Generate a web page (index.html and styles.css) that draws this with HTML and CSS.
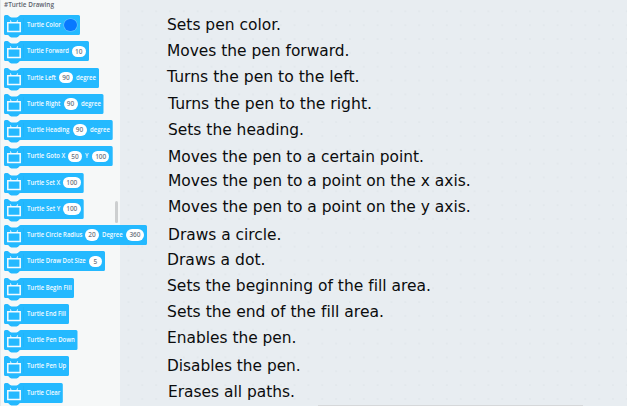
FILE: index.html
```
<!DOCTYPE html>
<html lang="en">
<head>
<meta charset="utf-8">
<title>Turtle Drawing</title>
<link rel="stylesheet" href="styles.css">
</head>
<body>
<main class="workspace">
  <aside class="palette">
    <h1 class="heading">#Turtle Drawing</h1>
    <div class="blocks" id="blocks"></div>
    <div class="scrollbar"></div>
  </aside>
  <section class="notes" id="notes"></section>
  <div class="hscroll"></div>
</main>
<script src="script.js"></script>
</body>
</html>
```
FILE: styles.css
```
* { box-sizing: border-box; }
body {
  margin: 0;
  width: 627px;
  height: 406px;
  overflow: hidden;
}
.workspace {
  position: relative;
  display: flex;
  height: 406px;
  background-color: #e8edf1;
  background-image: radial-gradient(circle, #e1e7eb 0.6px, transparent 1.1px);
  background-size: 13.85px 13.85px;
  background-position: 10.8px 4.4px;
}
.palette {
  position: relative;
  z-index: 1;
  width: 120px;
  flex: none;
  background: #f6f8f8;
  border-left: 1px solid #e6eaec;
}
.heading {
  margin: 0;
  padding-left: 3px;
  height: 15px;
  font: 600 6.4px/10px "Open Sans", sans-serif;
  color: #5d636d;
  white-space: nowrap;
}
.blocks {
  display: flex;
  flex-direction: column;
  gap: 6.25px;
  padding-left: 3px;
}
.block {
  position: relative;
  display: flex;
  align-items: center;
  flex: none;
  height: 20px;
  padding-left: 23px;
  font: 600 6.2px/10px "Open Sans", sans-serif;
  white-space: nowrap;
}
.shape {
  position: absolute;
  left: 0;
  top: 0;
  width: 100%;
  height: 23px;
  overflow: visible;
}
.label {
  position: relative;
  flex: none;
}
.label svg { display: block; overflow: visible; }
.label text { fill: #f4fcff; }
.pill {
  position: relative;
  flex: none;
  height: 11.5px;
  border-radius: 6px;
  background: #fff;
  color: #69717c;
  font: 500 6.5px/11.5px "Noto Sans", sans-serif;
  text-align: center;
}
.swatch {
  height: 12px;
  background: #0878ff;
  box-shadow: 0 0 0 0.6px #6cc4ff;
}
.scrollbar {
  position: absolute;
  left: 114px;
  top: 201px;
  width: 3px;
  height: 22px;
  border-radius: 2px;
  background: #cdcfd0;
}
.notes {
  padding-left: 47px;
  font: 15px/20px "DejaVu Sans", Verdana, sans-serif;
  font-variant-ligatures: none;
}
.note {
  height: 20px;
  white-space: nowrap;
}
.note svg { display: block; overflow: visible; }
.note text { fill: #0b0c0d; }
.hscroll {
  position: absolute;
  left: 318px;
  top: 405px;
  width: 265px;
  height: 1px;
  background: #d6d8da;
}
```
FILE: script.js
```
// Each block: overall width, then its parts as [kind, text, x offset, width].
const blocks = [
  [76, ['t', 'Turtle Color', 22.7, 33.8], ['c', '', 59.5, 13.5]],
  [85, ['t', 'Turtle Forward', 22.7, 41.8], ['p', '10', 67.5, 14.5]],
  [95, ['t', 'Turtle Left', 22.7, 28.8], ['p', '90', 55, 14], ['t', 'degree', 72, 20]],
  [99.5, ['t', 'Turtle Right', 22.7, 33.3], ['p', '90', 59.5, 14], ['t', 'degree', 76.5, 20]],
  [108.7, ['t', 'Turtle Heading', 22.7, 42.3], ['p', '90', 68.5, 14], ['t', 'degree', 85.5, 20]],
  [108.7, ['t', 'Turtle Goto X', 22.7, 38.3], ['p', '50', 64, 14], ['t', 'Y', 81.2, 3.5], ['p', '100', 88, 17.5]],
  [79.7, ['t', 'Turtle Set X', 22.7, 33.3], ['p', '100', 59, 17.5]],
  [79.7, ['t', 'Turtle Set Y', 22.7, 33.3], ['p', '100', 59, 17.5]],
  [143, ['t', 'Turtle Circle Radius', 22.7, 55.3], ['p', '20', 81, 14], ['t', 'Degree', 98.3, 20.7], ['p', '360', 122, 18]],
  [101, ['t', 'Turtle Draw Dot Size', 22.7, 58.8], ['p', '5', 84.5, 13.5]],
  [70, ['t', 'Turtle Begin Fill', 22.7, 44.6]],
  [65, ['t', 'Turtle End Fill', 22.7, 39]],
  [73.5, ['t', 'Turtle Pen Down', 22.7, 47.8]],
  [65, ['t', 'Turtle Pen Up', 22.7, 39.3]],
  [58.8, ['t', 'Turtle Clear', 22.7, 33.3]]
];

// Each note: text, left, baseline, width.
const notes = [
  ['Sets pen color.', 167, 29.6, 114],
  ['Moves the pen forward.', 166.5, 56.4, 182.5],
  ['Turns the pen to the left.', 167, 82, 192.5],
  ['Turns the pen to the right.', 168, 108.8, 204],
  ['Sets the heading.', 168, 135.3, 136],
  ['Moves the pen to a certain point.', 168.3, 162, 256],
  ['Moves the pen to a point on the x axis.', 168.3, 185.8, 302.7],
  ['Moves the pen to a point on the y axis.', 168.3, 212, 302.7],
  ['Draws a circle.', 167.5, 240.5, 113.5],
  ['Draws a dot.', 167, 264.6, 98.5],
  ['Sets the beginning of the fill area.', 167, 291, 264],
  ['Sets the end of the fill area.', 167, 317, 217],
  ['Enables the pen.', 166.5, 343.2, 129.5],
  ['Disables the pen.', 166.5, 370.6, 133.7],
  ['Erases all paths.', 168, 396.6, 127]
];

const outline = w => `M1.5 0H3.5C5 0 5.5 2.5 7.5 2.5H12.5C14.5 2.5 15 0 16.5 0H${w - 1.5}Q${w} 0 ${w} 1.5V18.5Q${w} 20 ${w - 1.5} 20H16.5C15 20 14.5 22.4 12.5 22.4H7.5C5.5 22.4 5 20 3.5 20H1.5Q0 20 0 18.5V1.5Q0 0 1.5 0Z`;

document.getElementById('blocks').innerHTML = blocks.map(([w, ...parts]) => {
  let x = 23;
  const body = parts.map(([kind, text, left, width]) => {
    const style = `width:${width}px;margin-left:${left - x}px`;
    x = left + width;
    if (kind === 't') {
      return `<span class="label" style="${style}"><svg width="${width}" height="10"><text x="0" y="7.4" textLength="${width}" lengthAdjust="spacingAndGlyphs">${text}</text></svg></span>`;
    }
    return `<span class="pill${kind === 'c' ? ' swatch' : ''}" style="${style}">${text}</span>`;
  }).join('');
  return `<div class="block" style="width:${w}px"><svg class="shape"><path fill="#24b9ff" d="${outline(w)}"/><path d="M19.5 3V17" stroke="#20b1f5" stroke-width=".6"/><path d="M3.8 7.8H16.2V16.6H3.8Z" fill="none" stroke="#f2fbff" stroke-width="1.5"/><path d="M6.4 5.4L7.2 7.5M13.6 5.4L12.8 7.5" stroke="#f2fbff" stroke-width="1"/></svg>${body}</div>`;
}).join('');

// The first note's box starts 15px above its baseline.
let previous = -5;
document.getElementById('notes').innerHTML = notes.map(([text, left, base, width]) => {
  const gap = base - previous - 20;
  previous = base;
  return `<div class="note" style="margin-top:${gap}px;margin-left:${left - 167}px"><svg width="${width}" height="20"><text x="0" y="15" textLength="${width}" lengthAdjust="spacingAndGlyphs">${text}</text></svg></div>`;
}).join('');
```
